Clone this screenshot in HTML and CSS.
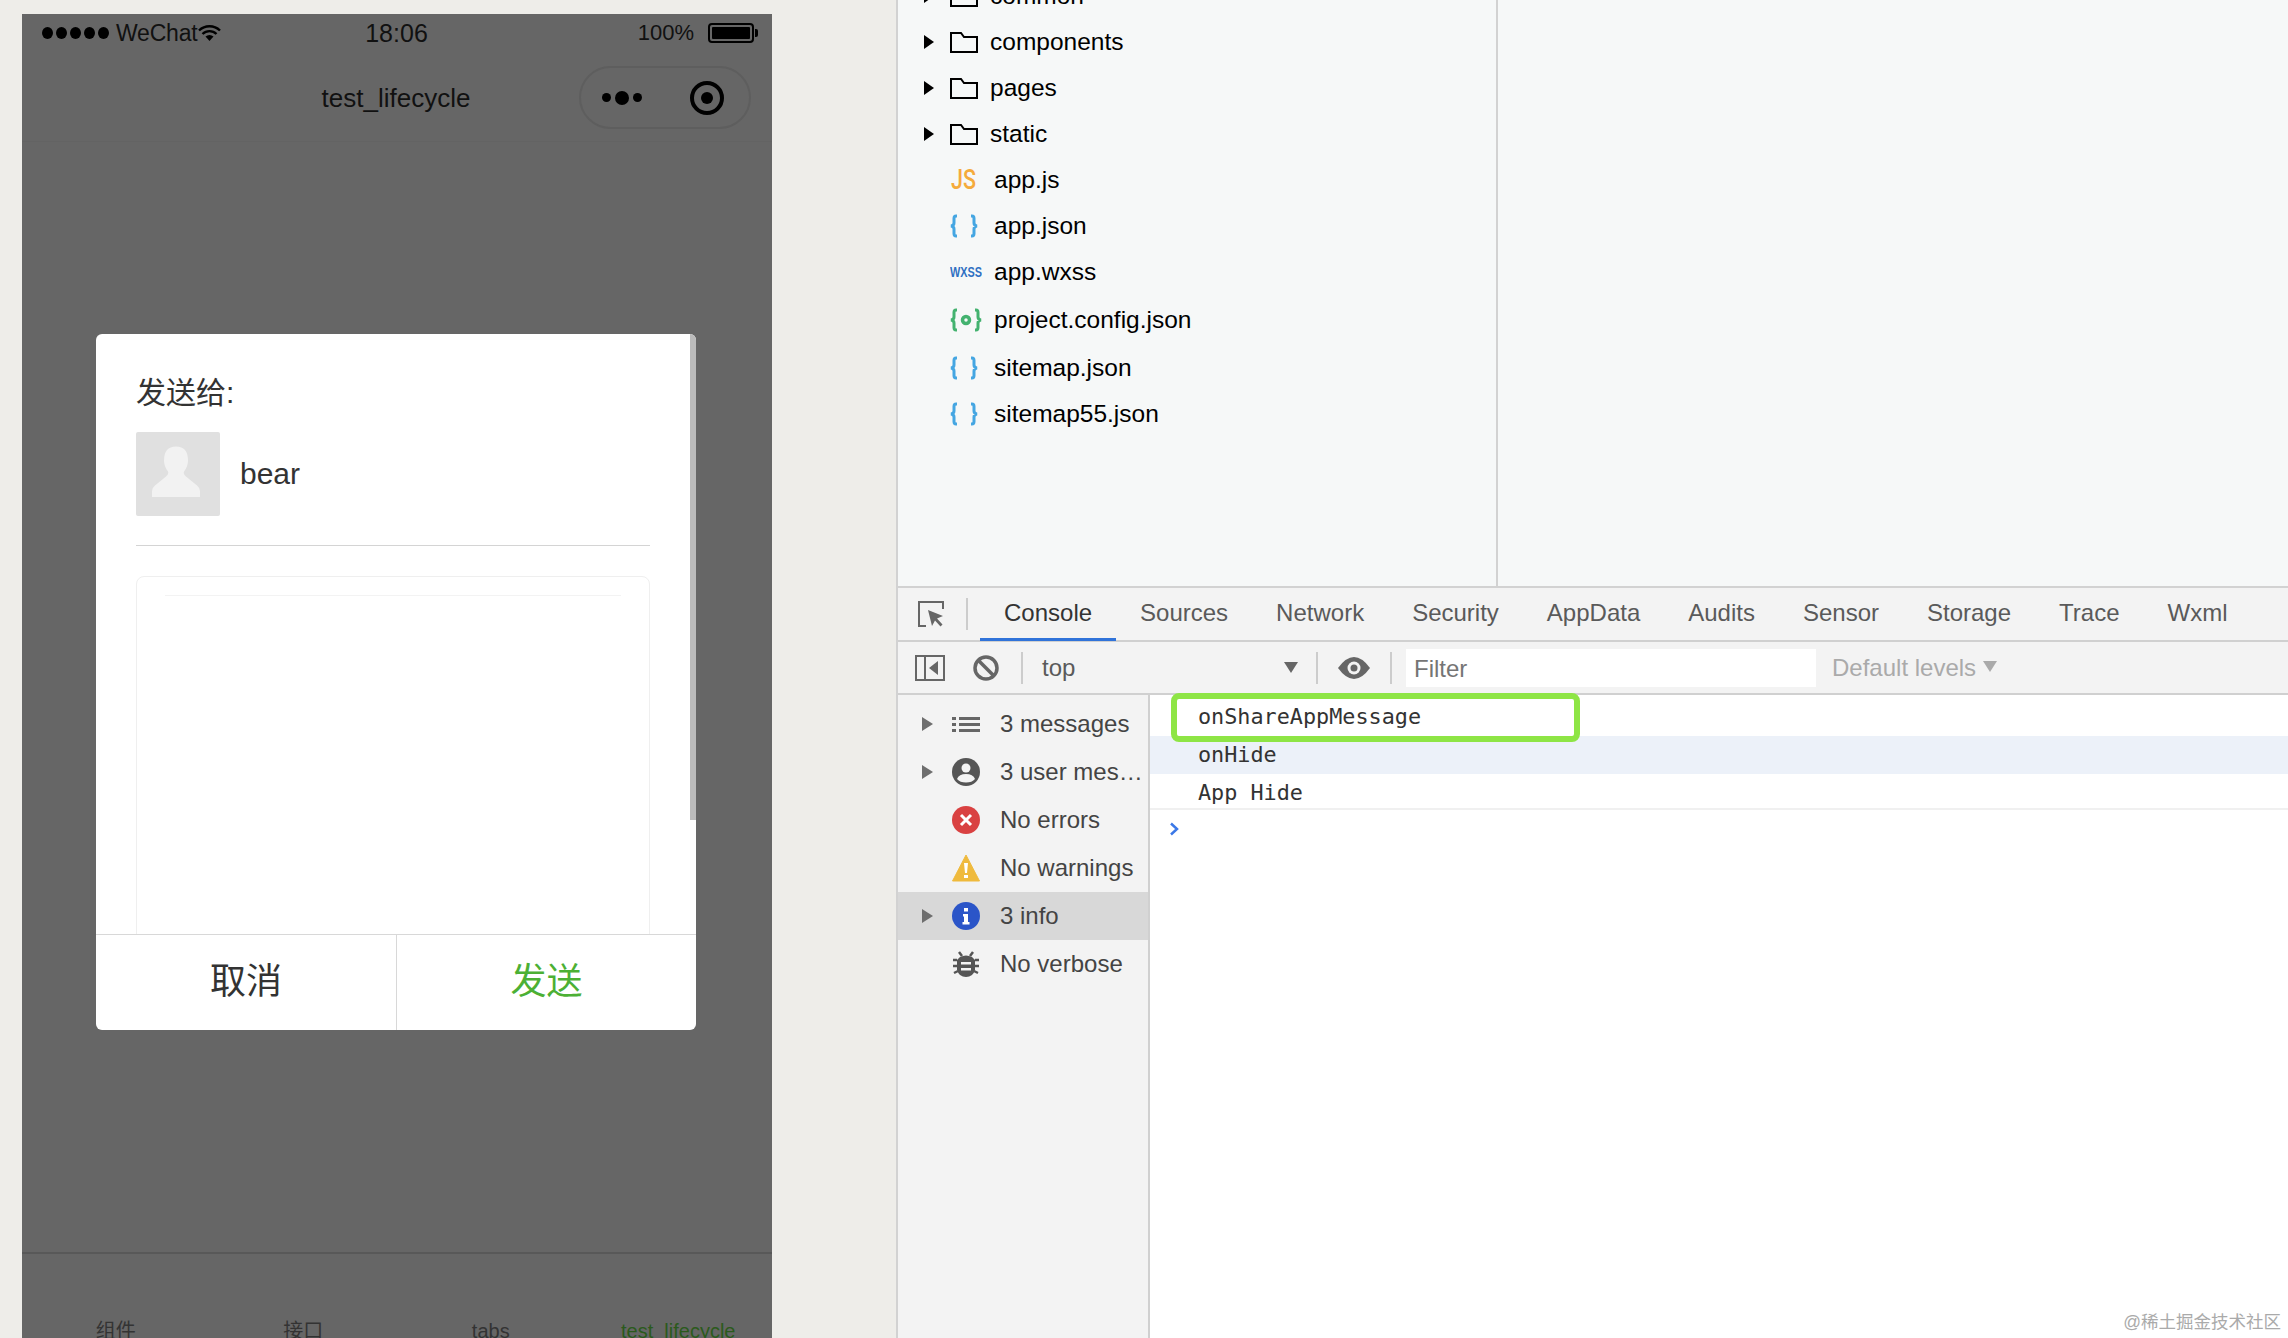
FILE: index.html
```html
<!DOCTYPE html>
<html lang="en">

<head>
    <meta charset="UTF-8">
    <meta name="viewport" content="width=device-width, initial-scale=1.0">
    <title>test_lifecycle</title>
    <link rel="stylesheet" href="styles.css">
</head>

<body>
    <!-- simulator -->
    <div class="phone">
        <div class="status-bar">
            <div class="status-left">
                <span class="signal"><i></i><i></i><i></i><i></i><i></i></span>
                <span class="carrier">WeChat</span>
                <svg class="wifi" width="23" height="16" viewBox="0 0 23 16">
                    <path d="M1 5.500a15 15 0 0 1 21 0M4.500 9a10 10 0 0 1 14 0" fill="none" stroke="#000" stroke-width="2.400"/>
                    <path d="M7.500 11.500a6 6 0 0 1 8 0L11.500 16z" fill="#000"/>
                </svg>
            </div>
            <div class="status-time">18:06</div>
            <div class="status-right">
                <span class="percent">100%</span>
                <span class="battery"><i></i></span>
                <span class="battery-nub"></span>
            </div>
        </div>
        <div class="nav-bar">
            <div></div>
            <div class="nav-title">test_lifecycle</div>
            <div class="capsule">
                <span class="capsule-dots"><i></i><i></i><i></i></span>
                <span class="capsule-target"><i></i></span>
            </div>
        </div>
        <div class="phone-body">
            <div class="dialog">
                <div class="dialog-content">
                    <div class="dialog-title">发送给:</div>
                    <div class="receiver">
                        <div class="avatar">
                            <svg width="84" height="84" viewBox="0 0 84 84">
                                <path d="M16 65v-6q0-3 3-5.500l11-9q3-2.500 2-5-4-5-4-11 0-14 12-14t12 14q0 6-4 11-1 2.500 2 5l11 9q3 2.500 3 5.500v6z" fill="#f2f2f2"/>
                            </svg>
                        </div>
                        <span class="receiver-name">bear</span>
                    </div>
                    <div class="preview-card">
                        <div class="preview-line"></div>
                    </div>
                    <div class="dialog-scrollbar"></div>
                </div>
                <div class="dialog-buttons">
                    <div class="dialog-btn">取消</div>
                    <div class="dialog-btn btn-send">发送</div>
                </div>
            </div>
        </div>
        <div class="tab-bar">
            <div class="tab-item">组件</div>
            <div class="tab-item">接口</div>
            <div class="tab-item">tabs</div>
            <div class="tab-item tab-active">test_lifecycle</div>
        </div>
    </div>

    <!-- ide panel -->
    <div class="ide">
        <div class="explorer">
            <div class="tree">
                <div class="row">
                    <span class="arrow"></span>
                    <svg class="folder" width="28" height="21" viewBox="0 0 28 21"><path d="M1 20V1h10l3 4h13v15z"/></svg>
                    <span class="row-name">common</span>
                </div>
                <div class="row">
                    <span class="arrow"></span>
                    <svg class="folder" width="28" height="21" viewBox="0 0 28 21"><path d="M1 20V1h10l3 4h13v15z"/></svg>
                    <span class="row-name">components</span>
                </div>
                <div class="row">
                    <span class="arrow"></span>
                    <svg class="folder" width="28" height="21" viewBox="0 0 28 21"><path d="M1 20V1h10l3 4h13v15z"/></svg>
                    <span class="row-name">pages</span>
                </div>
                <div class="row">
                    <span class="arrow"></span>
                    <svg class="folder" width="28" height="21" viewBox="0 0 28 21"><path d="M1 20V1h10l3 4h13v15z"/></svg>
                    <span class="row-name">static</span>
                </div>
                <div class="row file">
                    <svg class="file-icon" width="32" height="24" viewBox="0 0 32 24"><text class="icon-js" x="1" y="21" textLength="25" lengthAdjust="spacingAndGlyphs">JS</text></svg>
                    <span class="row-name">app.js</span>
                </div>
                <div class="row file">
                    <svg class="file-icon" width="32" height="24" viewBox="0 0 32 24"><path class="braces blue" d="M7 2H6Q4 2 4 4.500V9q0 2.500-3 3 3 .5 3 3v4.500Q4 22 6 22h1M21 2h1q2 0 2 2.500V9q0 2.500 3 3-3 .5-3 3v4.500q0 2.500-2 2.500h-1"/></svg>
                    <span class="row-name">app.json</span>
                </div>
                <div class="row file">
                    <svg class="file-icon" width="32" height="24" viewBox="0 0 32 24"><text class="icon-wxss" x="0" y="17" textLength="32" lengthAdjust="spacingAndGlyphs">WXSS</text></svg>
                    <span class="row-name">app.wxss</span>
                </div>
                <div class="row file gap-2">
                    <svg class="file-icon" width="32" height="24" viewBox="0 0 32 24">
                        <path class="braces green" d="M7 2H6Q4 2 4 4.500V9q0 2.500-3 3 3 .5 3 3v4.500Q4 22 6 22h1M25 2h1q2 0 2 2.500V9q0 2.500 3 3-3 .5-3 3v4.500q0 2.500-2 2.500h-1"/>
                        <circle cx="16" cy="12" r="3.500" fill="none" stroke="#43b26f" stroke-width="3.500"/>
                    </svg>
                    <span class="row-name">project.config.json</span>
                </div>
                <div class="row file gap-2">
                    <svg class="file-icon" width="32" height="24" viewBox="0 0 32 24"><path class="braces blue" d="M7 2H6Q4 2 4 4.500V9q0 2.500-3 3 3 .5 3 3v4.500Q4 22 6 22h1M21 2h1q2 0 2 2.500V9q0 2.500 3 3-3 .5-3 3v4.500q0 2.500-2 2.500h-1"/></svg>
                    <span class="row-name">sitemap.json</span>
                </div>
                <div class="row file">
                    <svg class="file-icon" width="32" height="24" viewBox="0 0 32 24"><path class="braces blue" d="M7 2H6Q4 2 4 4.500V9q0 2.500-3 3 3 .5 3 3v4.500Q4 22 6 22h1M21 2h1q2 0 2 2.500V9q0 2.500 3 3-3 .5-3 3v4.500q0 2.500-2 2.500h-1"/></svg>
                    <span class="row-name">sitemap55.json</span>
                </div>
            </div>
            <div class="editor"></div>
        </div>

        <div class="dev-tabs">
            <svg class="inspect" width="26" height="26" viewBox="0 0 26 26">
                <path d="M8 25H1V1h24v7" fill="none" stroke="#666" stroke-width="2"/>
                <path d="M10 9l15 6-6 2.500 5.500 6-2 2-5.500-6-3 5.500z" fill="#666"/>
            </svg>
            <span class="tool-sep"></span>
            <div class="dev-tab tab-selected">Console</div>
            <div class="dev-tab">Sources</div>
            <div class="dev-tab">Network</div>
            <div class="dev-tab">Security</div>
            <div class="dev-tab">AppData</div>
            <div class="dev-tab">Audits</div>
            <div class="dev-tab">Sensor</div>
            <div class="dev-tab">Storage</div>
            <div class="dev-tab">Trace</div>
            <div class="dev-tab">Wxml</div>
        </div>

        <div class="toolbar">
            <svg class="tool-sidebar" width="30" height="26" viewBox="0 0 30 26">
                <path d="M1 1h28v24H1zM10 1v24" fill="none" stroke="#666" stroke-width="2"/>
                <path d="M23 6v14l-9-7z" fill="#666"/>
            </svg>
            <svg class="tool-clear" width="26" height="26" viewBox="0 0 26 26">
                <circle cx="13" cy="13" r="11" fill="none" stroke="#666" stroke-width="3.500"/>
                <path d="M5 5l16 16" stroke="#666" stroke-width="3.500"/>
            </svg>
            <span class="tool-sep sep-top"></span>
            <div class="context">
                <span>top</span>
                <i class="caret"></i>
            </div>
            <span class="tool-sep"></span>
            <svg class="tool-eye" width="32" height="22" viewBox="0 0 32 22">
                <path d="M0 11Q8 0 16 0t16 11Q24 22 16 22T0 11z" fill="#666"/>
                <circle cx="16" cy="11" r="6.500" fill="#f3f3f3"/>
                <circle cx="16" cy="11" r="3.500" fill="#666"/>
            </svg>
            <span class="tool-sep"></span>
            <div class="filter">Filter</div>
            <div class="levels">Default levels <i class="caret caret-light"></i></div>
        </div>

        <div class="console-area">
            <div class="sidebar">
                <div class="side-row">
                    <i class="side-arrow"></i>
                    <svg class="side-icon" width="28" height="28" viewBox="0 0 28 28">
                        <path d="M0 7h4v3H0zM0 13h4v3H0zM0 19h4v3H0zM7 7h21v3H7zM7 13h21v3H7zM7 19h21v3H7z" fill="#666"/>
                    </svg>
                    <span>3 messages</span>
                </div>
                <div class="side-row">
                    <i class="side-arrow"></i>
                    <svg class="side-icon" width="28" height="28" viewBox="0 0 28 28">
                        <circle cx="14" cy="14" r="14" fill="#555"/>
                        <circle cx="14" cy="10" r="4.500" fill="#f3f3f3"/>
                        <path d="M5 21q2-5 9-5t9 5q-3 3.500-9 3.500T5 21z" fill="#f3f3f3"/>
                    </svg>
                    <span>3 user mes…</span>
                </div>
                <div class="side-row">
                    <svg class="side-icon" width="28" height="28" viewBox="0 0 28 28">
                        <circle cx="14" cy="14" r="14" fill="#d94141"/>
                        <path d="M9 9l10 10M19 9L9 19" stroke="#fff" stroke-width="3"/>
                    </svg>
                    <span>No errors</span>
                </div>
                <div class="side-row">
                    <svg class="side-icon" width="28" height="28" viewBox="0 0 28 28">
                        <path d="M14 1L27.500 27H.5z" fill="#efba3d" stroke="#efba3d" stroke-linejoin="round"/>
                        <path d="M12 9h4l-1 10h-2zM12 21h4v3h-4z" fill="#fff"/>
                    </svg>
                    <span>No warnings</span>
                </div>
                <div class="side-row side-selected">
                    <i class="side-arrow"></i>
                    <svg class="side-icon" width="28" height="28" viewBox="0 0 28 28">
                        <circle cx="14" cy="14" r="14" fill="#2b55c8"/>
                        <path d="M12 6h4v3.500h-4zM11 12h5v8h1.500v2.500h-7V20H12v-5.500h-1z" fill="#fff"/>
                    </svg>
                    <span>3 info</span>
                </div>
                <div class="side-row">
                    <svg class="side-icon" width="28" height="28" viewBox="0 0 28 28">
                        <path d="M7 2l3 4M21 2l-3 4M1 10h4M23 10h4M1 16h4M23 16h4M2 23l4-2M26 23l-4-2" stroke="#555" stroke-width="2.500"/>
                        <path d="M8 7q6-3 12 0l3 3v10q-2 7-9 7t-9-7V10z" fill="#555"/>
                        <path d="M9 12h10v2.500H9zM9 18h10v2.500H9z" fill="#f3f3f3"/>
                    </svg>
                    <span>No verbose</span>
                </div>
            </div>
            <div class="console">
                <div class="log-line">onShareAppMessage</div>
                <div class="log-line log-info">onHide</div>
                <div class="log-line log-last">App Hide</div>
                <svg class="prompt" width="10" height="14" viewBox="0 0 10 14">
                    <path d="M2 1.500L8 7l-6 5.500" fill="none" stroke="#3b78e7" stroke-width="2.500"/>
                </svg>
                <div class="mark-box"></div>
                <div class="watermark">@稀土掘金技术社区</div>
            </div>
        </div>
    </div>
</body>

</html>
```
FILE: styles.css
```css
* {
    box-sizing: border-box;
}

html,
body {
    margin: 0;
    height: 1338px;
    overflow: hidden;
}

body {
    display: flex;
    font-family: "Liberation Sans", "Noto Sans CJK SC", Arial, sans-serif;
    background-color: #eeede9;
    color: #000;
}

i {
    display: block;
}

/* simulator */
.phone {
    width: 750px;
    height: 1324px;
    margin: 14px 0 0 22px;
    background-color: #666;
    display: flex;
    flex-direction: column;
    overflow: hidden;
}

.status-bar {
    height: 38px;
    display: grid;
    grid-template-columns: 1fr auto 1fr;
    align-items: center;
    color: #111;
}

.status-left {
    display: flex;
    align-items: center;
    padding-left: 20px;
}

.signal {
    display: flex;
    gap: 3px;
    margin-right: 7px;
}

.signal i {
    width: 11px;
    height: 12px;
    border-radius: 50%;
    background-color: #000;
}

.carrier {
    font-size: 23px;
    letter-spacing: -0.2px;
}

.wifi {
    margin-left: 1px;
}

.status-time {
    font-size: 25px;
    margin-left: -1px;
}

.status-right {
    display: flex;
    align-items: center;
    justify-content: flex-end;
    padding-right: 14px;
}

.percent {
    font-size: 22px;
    margin-right: 14px;
}

.battery {
    width: 46px;
    height: 20px;
    border: 2px solid #000;
    border-radius: 4px;
    padding: 2px;
}

.battery i {
    width: 100%;
    height: 100%;
    border-radius: 1px;
    background-color: #000;
}

.battery-nub {
    width: 3px;
    height: 8px;
    margin-left: 1px;
    border-radius: 0 2px 2px 0;
    background-color: #000;
}

.nav-bar {
    height: 90px;
    display: grid;
    grid-template-columns: 1fr auto 1fr;
    align-items: center;
    border-bottom: 1px solid #636363;
}

.nav-title {
    font-size: 26px;
    padding: 3px 2px 0 0;
    color: #111;
}

.capsule {
    justify-self: end;
    width: 172px;
    height: 63px;
    margin: 0 21px 0 0;
    border: 2px solid #5e5e5e;
    border-radius: 32px;
    display: flex;
    align-items: center;
    padding-left: 21px;
    position: relative;
    top: 1px;
}

.capsule-dots {
    display: flex;
    align-items: center;
    gap: 4px;
}

.capsule-dots i {
    width: 9px;
    height: 9px;
    border-radius: 50%;
    background-color: #000;
}

.capsule-dots i:nth-child(2) {
    width: 14px;
    height: 14px;
}

.capsule-target {
    width: 34px;
    height: 34px;
    margin-left: 48px;
    border: 4px solid #000;
    border-radius: 50%;
    display: flex;
    align-items: center;
    justify-content: center;
}

.capsule-target i {
    width: 12px;
    height: 12px;
    border-radius: 50%;
    background-color: #000;
}

.phone-body {
    height: 1110px;
    padding: 192px 0 0 74px;
    flex-shrink: 0;
}

.dialog {
    width: 600px;
    height: 696px;
    background-color: #fff;
    border-radius: 6px;
    overflow: hidden;
    display: flex;
    flex-direction: column;
}

.dialog-content {
    height: 600px;
    padding: 39px 46px 0 40px;
    overflow: hidden;
    position: relative;
    color: #333;
}

.dialog-title {
    font-size: 30px;
    line-height: 40px;
}

.receiver {
    margin-top: 19px;
    padding-bottom: 29px;
    border-bottom: 1px solid #d4d4d4;
    display: flex;
    align-items: center;
}

.avatar {
    width: 84px;
    height: 84px;
    background-color: #e0e0e0;
    border-radius: 2px;
}

.avatar svg {
    display: block;
}

.receiver-name {
    font-size: 30px;
    margin-left: 20px;
}

.preview-card {
    height: 420px;
    margin-top: 30px;
    padding: 18px 28px 0;
    border: 1px solid #efefef;
    border-radius: 8px;
}

.preview-line {
    height: 1px;
    background-color: #f3f3f3;
}

.dialog-scrollbar {
    position: absolute;
    top: 0;
    right: 0;
    width: 6px;
    height: 486px;
    background-color: #bbb;
}

.dialog-buttons {
    height: 96px;
    border-top: 1px solid #d8d8d8;
    display: grid;
    grid-template-columns: 300px 300px;
}

.dialog-btn {
    font-size: 36px;
    padding-bottom: 10px;
    color: #333;
    display: flex;
    align-items: center;
    justify-content: center;
}

.dialog-btn + .dialog-btn {
    border-left: 1px solid #d8d8d8;
}

.btn-send {
    color: #4cb034;
}

.tab-bar {
    height: 86px;
    flex-shrink: 0;
    border-top: 2px solid #585858;
    display: grid;
    grid-template-columns: repeat(4, 1fr);
    padding-top: 65px;
    font-size: 20px;
    line-height: 24px;
    text-align: center;
    color: #333;
}

.tab-active {
    color: #2b5a1c;
}

/* ide panel */
.ide {
    width: 1392px;
    margin-left: 124px;
    border-left: 2px solid #d2d2d2;
    display: flex;
    flex-direction: column;
    flex-shrink: 0;
}

.explorer {
    height: 588px;
    display: flex;
    background-color: #f6f8f8;
    border-bottom: 2px solid #d2d2d2;
    overflow: hidden;
}

.tree {
    width: 600px;
    margin-top: -27px;
    padding-left: 26px;
    border-right: 2px solid #d2d2d2;
}

.row {
    height: 46px;
    display: flex;
    align-items: center;
    font-size: 24.500px;
}

.gap-2 {
    margin-top: 2px;
}

.arrow {
    width: 0;
    height: 0;
    border-style: solid;
    border-width: 7px 0 7px 10px;
    border-color: transparent transparent transparent #000;
    margin-right: 16px;
}

.folder {
    fill: none;
    stroke: #000;
    stroke-width: 2;
    margin-right: 12px;
}

.file {
    padding-left: 26px;
}

.file-icon {
    margin-right: 12px;
    flex-shrink: 0;
}

.icon-js {
    font-family: "Roboto", sans-serif;
    font-size: 27px;
    font-weight: 500;
    fill: #f5ab3c;
}

.icon-wxss {
    font-family: "Liberation Sans", sans-serif;
    font-size: 14px;
    font-weight: bold;
    fill: #2f70c2;
}

.braces {
    fill: none;
    stroke-width: 3;
}

.braces.blue {
    stroke: #45a6e2;
}

.braces.green {
    stroke: #43b26f;
}

.editor {
    flex: 1;
}

.dev-tabs {
    height: 54px;
    flex-shrink: 0;
    display: flex;
    align-items: center;
    padding-left: 20px;
    background-color: #f3f3f3;
    border-bottom: 2px solid #d0d0d0;
}

.inspect {
    flex-shrink: 0;
    margin-right: 22px;
}

.tool-sep {
    width: 2px;
    height: 32px;
    flex-shrink: 0;
    background-color: #ccc;
}

.dev-tabs .tool-sep {
    margin-right: 12px;
}

.dev-tab {
    height: 54px;
    padding: 0 24px;
    font-size: 24px;
    line-height: 52px;
    color: #5a5a5a;
}

.tab-selected {
    color: #333;
    border-bottom: 3px solid #3073d9;
}

.toolbar {
    height: 53px;
    flex-shrink: 0;
    display: flex;
    align-items: center;
    padding-left: 17px;
    background-color: #f3f3f3;
    border-bottom: 2px solid #d0d0d0;
}

.tool-clear {
    margin: 0 22px 0 28px;
}

.context {
    width: 293px;
    padding: 0 18px 0 19px;
    display: flex;
    align-items: center;
    justify-content: space-between;
    font-size: 24px;
    color: #5a5a5a;
}

.caret {
    width: 0;
    height: 0;
    border-style: solid;
    border-width: 11px 7px 0;
    border-color: #666 transparent transparent;
}

.caret-light {
    display: inline-block;
    vertical-align: 4px;
    margin-left: 0;
    border-color: #aaa transparent transparent;
}

.tool-eye {
    margin: 0 20px 0 20px;
}

.filter {
    width: 410px;
    height: 38px;
    margin-left: 14px;
    padding-left: 8px;
    background-color: #fff;
    font-size: 24px;
    line-height: 40px;
    color: #757575;
}

.levels {
    margin-left: 16px;
    font-size: 24px;
    color: #aaa;
}

.console-area {
    flex: 1;
    display: flex;
    min-height: 0;
}

.sidebar {
    width: 252px;
    flex-shrink: 0;
    padding-top: 5px;
    background-color: #f3f3f3;
    border-right: 2px solid #d0d0d0;
}

.side-row {
    height: 48px;
    padding-left: 54px;
    position: relative;
    display: flex;
    align-items: center;
    font-size: 24px;
    color: #444;
    white-space: nowrap;
}

.side-selected {
    background-color: #d8d8d8;
}

.side-arrow {
    position: absolute;
    left: 24px;
    top: 17px;
    width: 0;
    height: 0;
    border-style: solid;
    border-width: 7px 0 7px 11px;
    border-color: transparent transparent transparent #6e6e6e;
}

.side-icon {
    margin-right: 20px;
    flex-shrink: 0;
}

.console {
    flex: 1;
    padding-top: 3px;
    position: relative;
    background-color: #fff;
}

.log-line {
    height: 38px;
    padding-left: 48px;
    font-family: "DejaVu Sans Mono", monospace;
    font-size: 21.800px;
    line-height: 38px;
    color: #333;
}

.log-info {
    background-color: #ecf1f9;
}

.log-last {
    height: 36px;
    border-bottom: 2px solid #f0f0f0;
}

.prompt {
    display: block;
    margin: 12px 0 0 19px;
}

/* annotation drawn over the log */
.mark-box {
    position: absolute;
    left: 21px;
    top: -2px;
    width: 409px;
    height: 49px;
    border: 6px solid #8ee545;
    border-radius: 8px;
}

.watermark {
    position: absolute;
    right: 7px;
    bottom: 5px;
    font-size: 17.500px;
    line-height: 22px;
    color: #aaa;
}
```
